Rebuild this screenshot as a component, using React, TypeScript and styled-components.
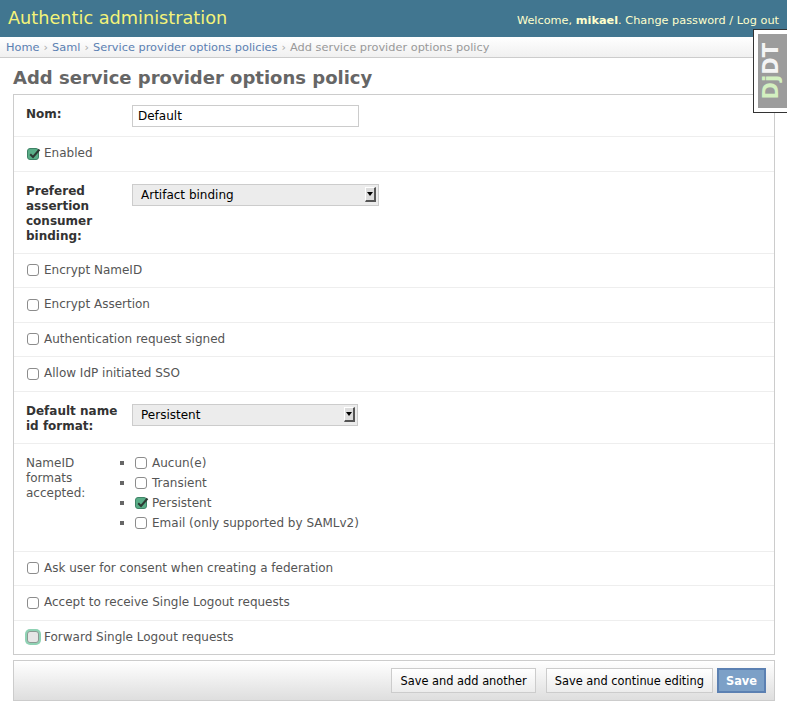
import React from 'react';
import styled, { createGlobalStyle, css } from 'styled-components';

const GlobalStyle = createGlobalStyle`
  html, body {
    margin: 0;
    padding: 0;
    background: #fff;
  }
  body {
    font-family: "DejaVu Sans", "Liberation Sans", sans-serif;
    font-size: 12px;
    color: #333;
  }
`;

const Header = styled.div`
  display: flex;
  align-items: center;
  justify-content: space-between;
  height: 37px;
  padding: 0 8px;
  background: #417690;
  box-sizing: border-box;
`;

const Branding = styled.div`
  font-size: 17.7px;
  color: #f4f379;
  padding-bottom: 2px;
`;

const UserTools = styled.div`
  font-size: 11.3px;
  color: #ffc;
  padding-top: 3px;

  strong {
    color: #ffffcc;
    font-weight: bold;
  }
`;

const Breadcrumbs = styled.div`
  padding: 3px 6px;
  line-height: 14px;
  font-size: 11.35px;
  color: #999;
  background: linear-gradient(#ffffff, #f0f0f0);
  border-bottom: 1px solid #ccc;
`;

const Crumb = styled.a`
  color: #5b80b2;
  text-decoration: none;
`;

const Sep = styled.span`
  color: #aaa;
  margin: 0 4px;
`;

const Content = styled.div`
  padding: 9px 12px 0 13px;
`;

const Title = styled.h1`
  margin: 0 0 5px;
  font-size: 18px;
  line-height: 22px;
  font-weight: bold;
  color: #666;
`;

const Fieldset = styled.div`
  border: 1px solid #ccc;
`;

const FormRow = styled.div<{ $kind: 'field' | 'check' | 'list' }>`
  display: flex;
  align-items: flex-start;
  border-bottom: 1px solid #eee;
  padding: 10px 12px 9px;

  ${(p) =>
    p.$kind === 'check' &&
    css`
      padding: 9px 12px 9.5px;
      align-items: center;
      line-height: 15px;
    `}

  ${(p) =>
    p.$kind === 'list' &&
    css`
      padding: 9px 12px 18px;
    `}

  &:last-child {
    border-bottom: none;
  }
`;

const FieldLabel = styled.label<{ $required?: boolean; $pad?: number }>`
  flex: 0 0 96px;
  padding: ${(p) => p.$pad ?? 2}px 10px 0 0;
  line-height: 15px;
  font-weight: ${(p) => (p.$required ? 'bold' : 'normal')};
  color: ${(p) => (p.$required ? '#333' : '#555')};
`;

const TextInput = styled.div`
  width: 227px;
  height: 22px;
  box-sizing: border-box;
  border: 1px solid #ccc;
  padding: 0 5px;
  line-height: 21px;
  color: #000;
  background: #fff;
`;

const Select = styled.div<{ $width: number }>`
  width: ${(p) => p.$width}px;
  height: 22px;
  margin-top: 2px;
  box-sizing: border-box;
  display: flex;
  align-items: center;
  justify-content: space-between;
  padding: 1px 2px 0 8px;
  border: 1px solid #ccc;
  background: #ececec;
  color: #000;
`;

const SelectArrow = styled.span`
  width: 11px;
  height: 15px;
  margin-top: -1px;
  box-sizing: border-box;
  display: flex;
  align-items: center;
  justify-content: center;
  border-top: 1px solid #fff;
  border-left: 1px solid #fff;
  border-right: 2px solid #555;
  border-bottom: 2px solid #555;
  background: #dcdcdc;

  &::after {
    content: '';
    border-left: 3px solid transparent;
    border-right: 3px solid transparent;
    border-top: 4px solid #000;
  }
`;

const CheckText = styled.span`
  color: #555;
`;

const Box = styled.span<{ $checked?: boolean; $focused?: boolean; $ml?: number }>`
  position: relative;
  display: inline-block;
  flex: 0 0 12px;
  width: 12px;
  height: 12px;
  margin: 0 5px 0 ${(p) => p.$ml ?? 1}px;
  box-sizing: border-box;
  border-radius: 3px;
  border: 1px solid #8c8c8c;
  background: #fff;

  ${(p) =>
    p.$checked &&
    css`
      border-color: #3f8366;
      background: #5aae88;
    `}

  ${(p) =>
    p.$focused &&
    css`
      background: #e6e6e6;
      border-color: #8a9a92;
      box-shadow: 0 0 0 2px #8fd2b4;
    `}

  svg {
    position: absolute;
    left: 0;
    top: -2px;
  }
`;

function Checkbox({ checked, focused, ml }: { checked?: boolean; focused?: boolean; ml?: number }) {
  return (
    <Box $checked={checked} $focused={focused} $ml={ml}>
      {checked && (
        <svg width="13" height="13" viewBox="0 0 13 13">
          <path d="M2.2 7.2 L5 10 L11.5 2.5" fill="none" stroke="#2c3a33" strokeWidth="2" />
        </svg>
      )}
    </Box>
  );
}

const FormatList = styled.ul`
  list-style: none;
  margin: 0 0 0 -12px;
  padding: 0;
`;

const FormatItem = styled.li`
  display: flex;
  align-items: center;
  height: 20px;
  color: #555;

  &::before {
    content: '';
    width: 4px;
    height: 4px;
    background: #666;
    margin-right: 10px;
  }
`;

const SubmitRow = styled.div`
  display: flex;
  justify-content: flex-end;
  margin-top: 5px;
  padding: 7px 8px;
  border: 1px solid #ccc;
  background: linear-gradient(#ffffff, #dedede);
`;

const Button = styled.button<{ $primary?: boolean }>`
  height: 25px;
  box-sizing: border-box;
  margin-left: 10px;
  padding: 0 8px;
  font-family: "DejaVu Sans", "Liberation Sans", sans-serif;
  font-size: 11.4px;
  color: #000;
  border: 1px solid #ccc;
  background: linear-gradient(#ffffff, #ececec);
  cursor: pointer;

  ${(p) =>
    p.$primary &&
    css`
      margin-left: 4px;
      padding: 0 7px;
      font-weight: bold;
      color: #fff;
      border: 2px solid #5b80b2;
      background: #7ca0c7;
    `}
`;

const DebugHandle = styled.div`
  position: fixed;
  top: 29px;
  right: 0;
  padding: 4px 0 4px 4px;
  background: #fff;
  border: 1px solid #333;
  border-right: none;
`;

const DebugInner = styled.div`
  width: 29px;
  height: 74px;
  display: flex;
  align-items: center;
  justify-content: center;
  background: #9c9c9c;
`;

const DebugText = styled.div`
  writing-mode: vertical-rl;
  transform: rotate(180deg);
  font-size: 21px;
  font-weight: bold;
  color: #f4f4f4;
  margin-left: -4px;

  span {
    color: #d3f0c0;
  }
`;

const checkRows = [
  'Encrypt NameID',
  'Encrypt Assertion',
  'Authentication request signed',
  'Allow IdP initiated SSO',
];

const formats = [
  { label: 'Aucun(e)', checked: false },
  { label: 'Transient', checked: false },
  { label: 'Persistent', checked: true },
  { label: 'Email (only supported by SAMLv2)', checked: false },
];

export default function App() {
  return (
    <>
      <GlobalStyle />
      <Header>
        <Branding>Authentic administration</Branding>
        <UserTools>
          Welcome, <strong>mikael</strong>. Change password / Log out
        </UserTools>
      </Header>
      <Breadcrumbs>
        <Crumb href="#">Home</Crumb>
        <Sep>›</Sep>
        <Crumb href="#">Saml</Crumb>
        <Sep>›</Sep>
        <Crumb href="#">Service provider options policies</Crumb>
        <Sep>›</Sep>
        Add service provider options policy
      </Breadcrumbs>
      <Content>
        <Title>Add service provider options policy</Title>
        <Fieldset>
          <FormRow $kind="field">
            <FieldLabel $required>Nom:</FieldLabel>
            <TextInput>Default</TextInput>
          </FormRow>
          <FormRow $kind="check">
            <Checkbox checked />
            <CheckText>Enabled</CheckText>
          </FormRow>
          <FormRow $kind="field">
            <FieldLabel $required>Prefered assertion consumer binding:</FieldLabel>
            <Select $width={247}>
              Artifact binding
              <SelectArrow />
            </Select>
          </FormRow>
          {checkRows.map((label) => (
            <FormRow $kind="check" key={label}>
              <Checkbox />
              <CheckText>{label}</CheckText>
            </FormRow>
          ))}
          <FormRow $kind="field">
            <FieldLabel $required>Default name id format:</FieldLabel>
            <Select $width={226}>
              Persistent
              <SelectArrow />
            </Select>
          </FormRow>
          <FormRow $kind="list">
            <FieldLabel $pad={3}>NameID formats accepted:</FieldLabel>
            <FormatList>
              {formats.map((f) => (
                <FormatItem key={f.label}>
                  <Checkbox checked={f.checked} ml={1} />
                  {f.label}
                </FormatItem>
              ))}
            </FormatList>
          </FormRow>
          <FormRow $kind="check">
            <Checkbox />
            <CheckText>Ask user for consent when creating a federation</CheckText>
          </FormRow>
          <FormRow $kind="check">
            <Checkbox />
            <CheckText>Accept to receive Single Logout requests</CheckText>
          </FormRow>
          <FormRow $kind="check">
            <Checkbox focused />
            <CheckText>Forward Single Logout requests</CheckText>
          </FormRow>
        </Fieldset>
        <SubmitRow>
          <Button>Save and add another</Button>
          <Button>Save and continue editing</Button>
          <Button $primary>Save</Button>
        </SubmitRow>
      </Content>
      <DebugHandle>
        <DebugInner>
          <DebugText>
            <span>Dj</span>DT
          </DebugText>
        </DebugInner>
      </DebugHandle>
    </>
  );
}
